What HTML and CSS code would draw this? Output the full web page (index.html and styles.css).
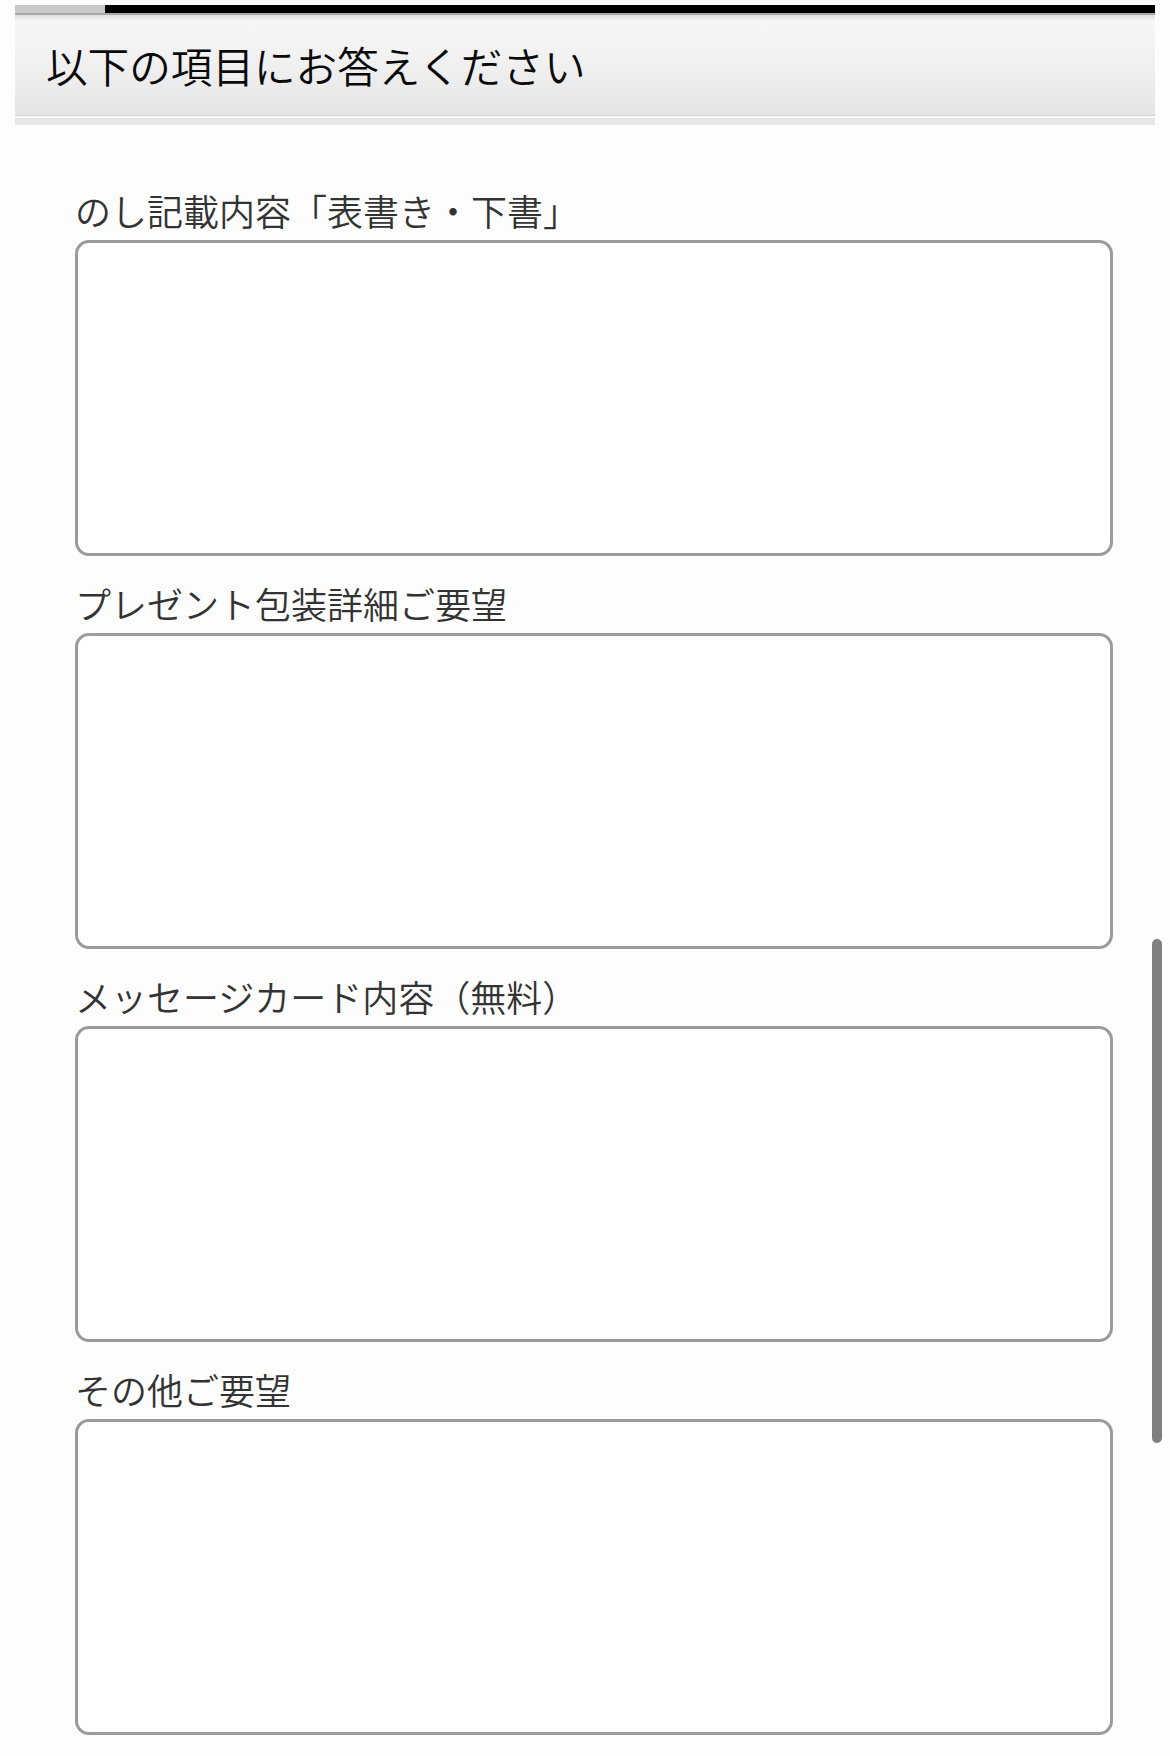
FILE: index.html
```html
<!DOCTYPE html>
<html>
	<head>
		<meta charset="UTF-8">
		<title>以下の項目にお答えください</title>
		<link rel="stylesheet" href="styles.css">
	</head>
	<body>
		<div class="progress">
			<div class="progress-done"></div>
		</div>
		<h1 class="heading">以下の項目にお答えください</h1>

		<form class="form">
			<div class="field">
				<label class="field-label" for="noshi">のし記載内容「表書き・下書」</label>
				<textarea id="noshi" class="field-input"></textarea>
			</div>
			<div class="field">
				<label class="field-label" for="wrap">プレゼント包装詳細ご要望</label>
				<textarea id="wrap" class="field-input"></textarea>
			</div>
			<div class="field">
				<label class="field-label" for="card">メッセージカード内容（無料）</label>
				<textarea id="card" class="field-input"></textarea>
			</div>
			<div class="field">
				<label class="field-label" for="other">その他ご要望</label>
				<textarea id="other" class="field-input"></textarea>
			</div>
		</form>

		<div class="scroll-thumb"></div>
	</body>
</html>
```

FILE: styles.css
```css
*{
	margin: 0;
	padding: 0;
	box-sizing: border-box;
}
html, body{
	background-color: #fdfdfd;
	overflow: hidden;
}
body{
	font-family: "Noto Sans CJK JP", "Noto Sans", sans-serif;
	color: #333;
}

/* 上部の進捗バー */
.progress{
	height: 8px;
	margin: 5px 15px 0;
	background-color: #000;
}
.progress-done{
	width: 90px;
	height: 100%;
	background-color: #c9c9c9;
}

/* 見出し */
.heading{
	margin: 0 15px;
	height: 103px;
	padding-left: 31px;
	border-top: 2px solid #a9a9a9;
	border-bottom: 1px solid #d2d2d2;
	background: linear-gradient(#dedede 0, #f6f6f6 6px, #f1f1f1 45%, #e5e5e5 100%);
	box-shadow: 0 2px 0 #fbfbfb, 0 9px 0 #e7e7e7;
	font-size: 41.6px;
	font-weight: 350;
	line-height: 100px;
	color: #0a0a0a;
}

/* 入力欄 */
.form{
	padding: 72px 57px 0 75px;
}
.field{
	display: flex;
	flex-direction: column;
	gap: 8px;
	margin-bottom: 25px;
}
.field:last-child{
	margin-bottom: 0;
}
.field-label{
	font-size: 36px;
	font-weight: 350;
	line-height: 44px;
	color: #333;
}
.field-input{
	display: block;
	width: 100%;
	height: 316px;
	border: 3px solid #9b9b9b;
	border-radius: 14px;
	background-color: #fff;
	resize: none;
	outline: none;
}

/* スクロールバー */
.scroll-thumb{
	position: fixed;
	top: 939px;
	right: 8px;
	width: 10px;
	height: 504px;
	border-radius: 5px;
	background-color: #808080;
}
```
